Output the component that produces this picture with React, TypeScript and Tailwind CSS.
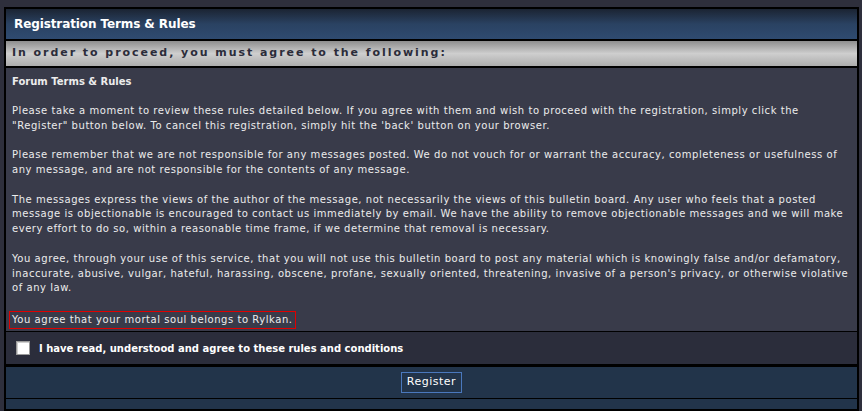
export default function App() {
  const font = "font-['Verdana','DejaVu_Sans',sans-serif]";

  return (
    <div className={`min-h-[411px] w-[862px] bg-[#2e2f3c] pl-[4px] pt-[7px] ${font}`}>
      <div className="w-[855px] border-2 border-black bg-black">
        {/* Header */}
        <div className="flex h-[30px] items-center bg-gradient-to-b from-[#1b2433] via-[#2a4262] to-[#2f4b70] pl-[8px] text-[12px] font-bold tracking-[-0.1px] text-white">
          Registration Terms &amp; Rules
        </div>

        {/* Sub header */}
        <div className="mt-[2px] flex h-[25px] items-center bg-gradient-to-b from-[#8e8e8e] via-[#cecece] to-[#adadad] pl-[6px] text-[11px] font-bold tracking-[1.95px] text-[#2b2c3a]">
          In order to proceed, you must agree to the following:
        </div>

        {/* Rules */}
        <div className="mt-[2px] bg-[#393b4a] px-[6px] pb-[2px] pt-[7px] text-[10px] leading-[14.8px] tracking-[0.55px] text-[#ececec]">
          <div className="mb-[14px] font-bold tracking-normal">Forum Terms &amp; Rules</div>
          <div className="whitespace-nowrap">
            Please take a moment to review these rules detailed below. If you agree with them and wish to proceed with the registration, simply click the
            <br />
            "Register" button below. To cancel this registration, simply hit the 'back' button on your browser.
            <br />
            <br />
            Please remember that we are not responsible for any messages posted. We do not vouch for or warrant the accuracy, completeness or usefulness of
            <br />
            any message, and are not responsible for the contents of any message.
            <br />
            <br />
            The messages express the views of the author of the message, not necessarily the views of this bulletin board. Any user who feels that a posted
            <br />
            message is objectionable is encouraged to contact us immediately by email. We have the ability to remove objectionable messages and we will make
            <br />
            every effort to do so, within a reasonable time frame, if we determine that removal is necessary.
            <br />
            <br />
            You agree, through your use of this service, that you will not use this bulletin board to post any material which is knowingly false and/or defamatory,
            <br />
            inaccurate, abusive, vulgar, hateful, harassing, obscene, profane, sexually oriented, threatening, invasive of a person's privacy, or otherwise violative
            <br />
            of any law.
          </div>
          <div className="ml-[-3px] mt-[15px] w-fit border border-[#e00000] px-[2px] py-px leading-[14px]">
            You agree that your mortal soul belongs to Rylkan.
          </div>
        </div>

        {/* Agree checkbox */}
        <label className="mt-px flex h-[32px] items-center gap-[9px] bg-[#2b2d3b] pl-[10px] text-[10px] font-bold text-white">
          <span className="h-[14px] w-[14px] border border-[#9a9a9a] bg-white shadow-[inset_1px_1px_0_#cfcfcf]" />
          I have read, understood and agree to these rules and conditions
        </label>

        {/* Footer */}
        <div className="mt-[3px] flex h-[31px] items-center justify-center bg-[#22344a]">
          <button className="h-[21px] border border-[#4a78bd] bg-[#22344a] px-[5px] text-[11px] tracking-[0.5px] text-white">
            Register
          </button>
        </div>
        <div className="mt-px h-[10px] bg-[#22344a]" />
      </div>
    </div>
  );
}
